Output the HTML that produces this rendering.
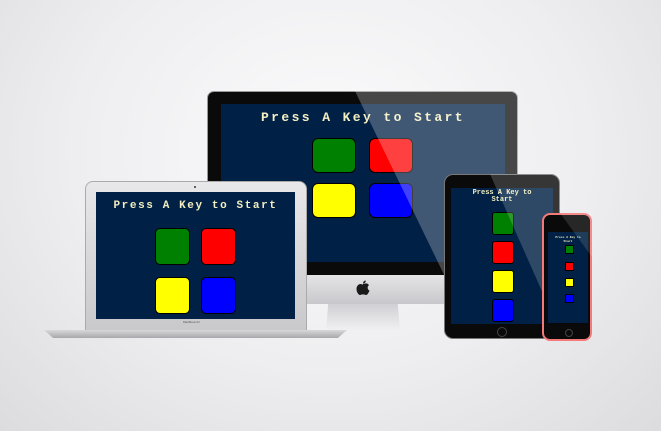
<!DOCTYPE html><html><head><style>
body{margin:0;width:661px;height:431px;overflow:hidden;background:radial-gradient(ellipse at 50% 35%,#fbfbfc 0%,#eeeef0 55%,#dcdcdf 100%);position:relative;font-family:"Liberation Mono",monospace}
div{position:absolute;box-sizing:border-box}
.t{color:#f2eec0;font-weight:bold;text-align:center;white-space:nowrap}
.sq{border:1.5px solid #000;border-radius:5px}
.g{background:#008000}.r{background:#ff0000}.y{background:#ffff00}.b{background:#0000ff}
</style></head><body>
<!-- iMac -->
<div style="left:207px;top:91px;width:311px;height:185px;background:#0a0a0a;border-radius:7px 7px 0 0;border:1px solid #999"></div>
<div style="left:207px;top:275px;width:311px;height:29px;background:linear-gradient(#e4e4e6,#c8c8cc);border-radius:0 0 4px 4px"></div>
<svg style="position:absolute;left:355px;top:279px" width="16" height="18" viewBox="0 0 16 18"><path d="M8 5C9 5 10.5 4 12 4.5 13 5 13.5 5.5 14 6.2 12 7.5 12.3 10.5 14.5 11.5 13.8 13.5 12.5 16 11 16 10 16 9.6 15.4 8 15.4 6.5 15.4 6 16 5 16 3.5 16 1.5 13 1.5 10 1.5 6.5 4 5 5.5 5 6.7 5 7.3 5.6 8 5.6ZM8 4.5C8 3 9.2 1.6 10.8 1.5 10.9 3.2 9.5 4.6 8 4.5Z" fill="#1a1a1a"/></svg>
<div style="left:326px;top:304px;width:74px;height:26px;background:linear-gradient(#d0d0d4,#f0f0f2);clip-path:polygon(3% 0,97% 0,100% 100%,0 100%)"></div>
<div style="left:221px;top:104px;width:284px;height:158px;background:#002145"></div>
<div class="t" style="left:221px;top:110px;width:284px;font-size:13px;letter-spacing:2.4px">Press A Key to Start</div>
<div class="sq g" style="left:312px;top:138px;width:44px;height:35px;border-radius:6px"></div>
<div class="sq r" style="left:369px;top:138px;width:44px;height:35px;border-radius:6px"></div>
<div class="sq y" style="left:312px;top:183px;width:44px;height:35px;border-radius:6px"></div>
<div class="sq b" style="left:369px;top:183px;width:44px;height:35px;border-radius:6px"></div>
<div style="left:355px;top:91px;width:163px;height:185px;background:rgba(255,255,255,0.25);clip-path:polygon(0 0,100% 0,100% 100%,55% 100%)"></div>
<!-- Laptop -->
<div style="left:85px;top:181px;width:222px;height:150px;background:linear-gradient(#e8e8ea,#c9c9cc);border-radius:8px 8px 0 0;border:1px solid #aaa"></div>
<div style="left:96px;top:192px;width:199px;height:127px;background:#002145"></div>
<div style="left:194px;top:186px;width:2px;height:2px;background:#333;border-radius:50%"></div>
<div class="t" style="left:96px;top:200px;width:199px;font-size:11px;letter-spacing:1.6px">Press A Key to Start</div>
<div class="sq g" style="left:155px;top:228px;width:35px;height:37px"></div>
<div class="sq r" style="left:201px;top:228px;width:35px;height:37px"></div>
<div class="sq y" style="left:155px;top:277px;width:35px;height:37px"></div>
<div class="sq b" style="left:201px;top:277px;width:35px;height:37px"></div>
<div style="left:183px;top:320px;font-size:3px;color:#555;font-family:'Liberation Sans'">MacBook Air</div>
<div style="left:44px;top:330px;width:303px;height:8px;background:linear-gradient(#d8d8da,#a8a8ac);clip-path:polygon(0 0,100% 0,97% 100%,3% 100%);border-radius:0 0 30px 30px"></div>
<!-- Tablet -->
<div style="left:444px;top:174px;width:116px;height:165px;background:#0a0a0a;border-radius:9px;border:1px solid #777"></div>
<div style="left:451px;top:188px;width:102px;height:136px;background:#002145"></div>
<div class="t" style="left:451px;top:190px;width:102px;font-size:7px;line-height:7px">Press A Key to<br>Start</div>
<div class="sq g" style="left:492px;top:212px;width:22px;height:23px;border-radius:3px"></div>
<div class="sq r" style="left:492px;top:241px;width:22px;height:23px;border-radius:3px"></div>
<div class="sq y" style="left:492px;top:270px;width:22px;height:23px;border-radius:3px"></div>
<div class="sq b" style="left:492px;top:299px;width:22px;height:23px;border-radius:3px"></div>
<div style="left:497px;top:327px;width:10px;height:10px;border:1px solid #444;border-radius:50%"></div>
<div style="left:490px;top:174px;width:70px;height:150px;background:rgba(255,255,255,0.18);clip-path:polygon(0 0,100% 0,100% 100%,95% 100%)"></div>
<!-- Phone -->
<div style="left:542px;top:213px;width:50px;height:128px;background:#0a0a0a;border:2.5px solid #f47a7a;border-radius:8px"></div>
<div style="left:548px;top:232px;width:40px;height:91px;background:#002145"></div>
<div class="t" style="left:548px;top:236px;width:40px;font-size:3px;line-height:4px">Press A Key to<br>Start</div>
<div class="sq g" style="left:565px;top:245px;width:9px;height:9px;border-radius:1px;border-width:1px"></div>
<div class="sq r" style="left:565px;top:262px;width:9px;height:9px;border-radius:1px;border-width:1px"></div>
<div class="sq y" style="left:565px;top:278px;width:9px;height:9px;border-radius:1px;border-width:1px"></div>
<div class="sq b" style="left:565px;top:294px;width:9px;height:9px;border-radius:1px;border-width:1px"></div>
<div style="left:565px;top:329px;width:8px;height:8px;border:1px solid #444;border-radius:50%"></div>
<div style="left:560px;top:213px;width:32px;height:110px;background:rgba(255,255,255,0.12);clip-path:polygon(0 0,100% 0,100% 40%)"></div>
</body></html>
